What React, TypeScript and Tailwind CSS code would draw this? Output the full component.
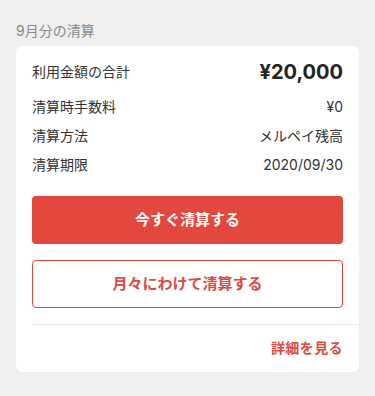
const font = {
  fontFamily: '"Inter", "Noto Sans CJK JP", sans-serif',
};

function Row({ label, value }: { label: string; value: string }) {
  return (
    <div className="flex h-[22px] items-center justify-between text-sm leading-[22px] text-[#333333]">
      <span>{label}</span>
      <span>{value}</span>
    </div>
  );
}

export default function App() {
  return (
    <div className="min-h-[396px] bg-[#efefef] px-4 pt-[21px] pb-6" style={font}>
      <h2 className="mb-[5px] text-sm leading-5 text-[#888888]">9月分の清算</h2>

      <div className="rounded-md bg-white pt-3 pb-[13px] pl-4">
        <div className="pr-4">
          <div className="flex h-7 items-center justify-between">
            <span className="text-sm text-[#333333]">利用金額の合計</span>
            <span className="text-xl font-bold text-[#222222]">¥20,000</span>
          </div>

          <div className="mt-[10px] flex flex-col gap-[7px]">
            <Row label="清算時手数料" value="¥0" />
            <Row label="清算方法" value="メルペイ残高" />
            <Row label="清算期限" value="2020/09/30" />
          </div>

          <div className="mt-5 flex flex-col gap-4">
            <button className="flex h-12 items-center justify-center rounded-[4px] bg-[#e2483e] text-[15px] font-bold text-white">
              今すぐ清算する
            </button>
            <button className="flex h-12 items-center justify-center rounded-[4px] border border-[#e2483e] bg-white text-[15px] font-bold text-[#e2483e]">
              月々にわけて清算する
            </button>
          </div>
        </div>

        <div className="mt-4 h-px bg-[#eeeeee]" />

        <div className="mt-3 flex justify-end pr-4">
          <a className="text-sm font-bold leading-[22px] tracking-[0.03em] text-[#e2483e]">
            詳細を見る
          </a>
        </div>
      </div>
    </div>
  );
}
